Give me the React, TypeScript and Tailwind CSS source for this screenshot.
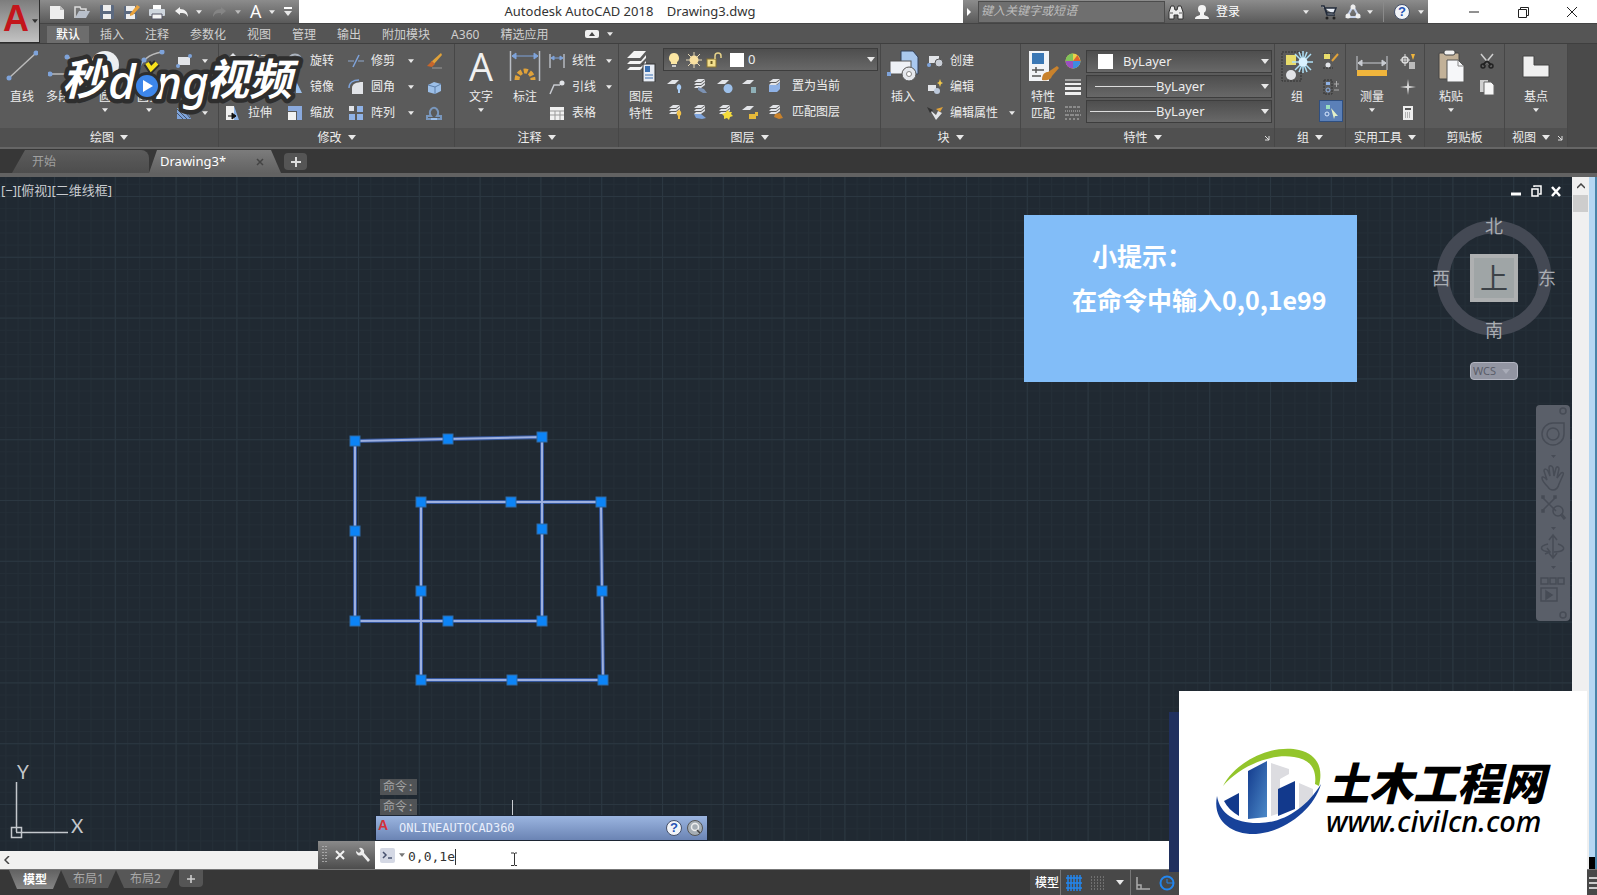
import type { ReactNode } from "react";

const SANS = "font-['Noto_Sans','Noto_Sans_CJK_SC',sans-serif]";
const MONO = "font-['DejaVu_Sans_Mono','Noto_Sans_CJK_SC',monospace]";

function Caret({ big = false, className = "text-[#e8e8e8]" }: { big?: boolean; className?: string }) {
  return (
    <svg viewBox="0 0 8 5" className={`${big ? "h-[5px] w-2" : "h-1 w-1.5"} shrink-0 ${className}`} aria-hidden>
      <path d="M0 0h8L4 5z" fill="currentColor" />
    </svg>
  );
}

/* ---------- icons ---------- */

function I16({ children }: { children: ReactNode }) {
  return (
    <svg viewBox="0 0 16 16" className="h-4 w-4 shrink-0" fill="none" aria-hidden>
      {children}
    </svg>
  );
}

function I32({ children }: { children: ReactNode }) {
  return (
    <svg viewBox="0 0 32 32" className="h-8 w-8 shrink-0" fill="none" aria-hidden>
      {children}
    </svg>
  );
}

const LIGHT = "#e2e4e8";
const BLUE = "#7ea3da";
const GOLD = "#e0a23a";

const quick = {
  fresh: <I16><path d="M1 2h10l4 4v9H1z" fill="#eee" /><path d="M11 2v4h4" fill="#bbb" /></I16>,
  open: <I16><path d="M1 14V3h5l1 2h5v3" stroke="#ddd" strokeWidth="1.5" /><path d="M1 14 5 7h11l-4 7z" fill="#b9c0cb" /></I16>,
  save: <I16><rect x="1" y="1" width="14" height="14" rx="1" fill="#5c6a80" /><rect x="4" y="1" width="8" height="6" fill="#eee" /><rect x="4" y="10" width="8" height="5" fill="#eee" /></I16>,
  saveAs: <I16><rect x="0" y="2" width="13" height="13" rx="1" fill="#5c6a80" /><rect x="2" y="2" width="9" height="5" fill="#eee" /><rect x="2" y="10" width="9" height="5" fill="#eee" /><path d="m6 10 7-9 3 2-7 8-3 1z" fill="#e9a23b" /></I16>,
  print: <I16><path d="M4 1h8v5H4z" fill="#fff" /><rect x="0" y="5" width="16" height="7" rx="1" fill="#cfd6de" /><path d="M3 10h10v5H3z" fill="#f4f4f4" stroke="#556" strokeWidth="1" /></I16>,
  undo: <I16><path d="M6 3 1 7l5 4V9c4 0 6 0 8 4 0-5-3-8-8-8z" fill="#f2f2f2" /></I16>,
  redo: <I16><path d="m10 3 5 4-5 4V9c-4 0-6 0-8 4 0-5 3-8 8-8z" fill="#858585" /></I16>,
};

const stack = <path d="M2 4 6 1h7l-4 3zM2 7l2-2h5l4-3v2L9 7zM2 10l2-2h5l4-3v2l-4 3z" fill={LIGHT} />;

const ico = {
  line: <I32><path d="M3 28 30 3" stroke="#bbb" strokeWidth="1.5" /><circle cx="3" cy="28" r="2.5" fill={BLUE} /><circle cx="30" cy="3" r="2.5" fill={BLUE} /></I32>,
  pline: <I32><path d="M2 24h18c8 0 8-16-2-17" stroke="#bbb" strokeWidth="1.5" /><circle cx="2" cy="24" r="2.5" fill={BLUE} /><circle cx="19" cy="7" r="2.5" fill={BLUE} /></I32>,
  circle: <I32><circle cx="16" cy="15" r="14" fill="#eceef0" /><circle cx="16" cy="15" r="2" fill={BLUE} /></I32>,
  arc: <I32><path d="M5 22C8 10 16 4 29 2" stroke="#bbb" strokeWidth="1.5" /><circle cx="29" cy="2" r="2.5" fill={BLUE} /><circle cx="11" cy="10" r="2.5" fill={BLUE} /></I32>,
  text: <span className="flex h-8 items-center font-['Open_Sans',sans-serif] text-[38px] text-[#f0f0f0]">A</span>,
  dim: <I32><path d="M1.5 1v30M30.5 1v30" stroke="#b9bdc4" strokeWidth="1.5" /><path d="M3 6h26M3 6l4-3v6zM29 6l-4-3v6z" stroke={BLUE} fill={BLUE} /><path d="M8 30a8 9 0 0 1 16 0" stroke={GOLD} strokeWidth="5" strokeDasharray="4 2" /></I32>,
  layers: <I32><path d="m2 8 7-7h12l-6 7zM2 14l3-3h11l5-6v3l-6 6zM2 20l3-3h11l5-6v3l-6 6z" fill="#f4f4f4" /><rect x="18" y="14" width="12" height="18" fill="#e8edf5" stroke="#333" /><rect x="20" y="16" width="5" height="6" fill="#3a6fb0" /><path d="M20 25h8M20 28h8" stroke="#3a6fb0" /></I32>,
  insert: <I32><path d="M14 1h12l5 6v17H14z" fill="#a9c8ef" stroke="#33415a" /><rect x="3" y="11" width="21" height="13" fill="#eef1f6" stroke="#555" /><circle cx="22" cy="24" r="7" fill="#e4e7ec" stroke="#555" /><circle cx="22" cy="24" r="2.5" fill="#fff" stroke="#888" /><rect x="0" y="22" width="4" height="4" fill={BLUE} /></I32>,
  match: <I32><rect x="2" y="1" width="20" height="30" fill="#f2f4f7" /><rect x="5" y="3" width="12" height="11" fill="#3b78b5" /><path d="M5 20h12M5 26h9M9 17v6" stroke="#555" strokeWidth="1.5" /><path d="M15 30c0-6 3-8 6-8l9-6 2 2-7 8c-1 4-6 5-10 4z" fill="#c9822c" /></I32>,
  group: <I32><rect x="1" y="2" width="19" height="29" stroke="#333" strokeDasharray="2 1" /><rect x="5" y="5" width="10" height="10" fill="#e9dd6b" /><circle cx="10" cy="25" r="5" fill={LIGHT} /><path d="M22 1v22M11 12h21M14 4l16 16M30 4 14 20M18 2l8 20M26 2l-8 20" stroke="#aee0f7" strokeWidth="1.5" /><circle cx="22" cy="12" r="4.5" fill="#d9f2ff" /></I32>,
  measure: <I32><path d="M1 6v14M31 6v14M2 13h28M2 13l4-3v6zM30 13l-4-3v6z" stroke="#c9ccd2" fill="#c9ccd2" /><rect x="1" y="20" width="30" height="6" fill="#f0b53c" /></I32>,
  paste: <I32><rect x="4" y="3" width="20" height="26" rx="1" fill="#c2b198" stroke="#444" /><rect x="9" y="0" width="11" height="5" rx="2" fill="#f2f2f2" stroke="#444" /><path d="M12 10h11l6 6v16H12z" fill="#f6f7f9" stroke="#555" /><path d="M23 10v6h6" stroke="#888" /></I32>,
  base: <I32><path d="M3 6h11v9h15v12H3z" fill="#f0f0f0" stroke="#444" /></I32>,

  rect: <I16><rect x="2" y="4" width="12" height="8" fill={LIGHT} /><circle cx="14" cy="3" r="2" fill={BLUE} /><circle cx="2" cy="13" r="2" fill={BLUE} /></I16>,
  ellipse: <I16><ellipse cx="8" cy="8" rx="7" ry="5" stroke={LIGHT} /></I16>,
  hatch: <I16><path d="M1 3h9l5 11H1z" fill={BLUE} /><path d="m1 8 6 6M1 4l10 10M6 3l8 10" stroke="#43536b" /></I16>,
  move: <I16><path d="M8 1v14M1 8h14" stroke={LIGHT} strokeWidth="1.5" /><path d="m8 0 3 3H5zM8 16l3-3H5zM0 8l3-3v6zM16 8l-3-3v6z" fill={LIGHT} /></I16>,
  copy: <I16><circle cx="6" cy="7" r="4.5" stroke={LIGHT} /><circle cx="11" cy="10" r="4" stroke={BLUE} /></I16>,
  stretch: <I16><path d="M1 1h8v14H1z" fill="#f0f0f0" /><path d="m9 1 5 14H9z" fill="#8db4e8" /><path d="M3 11h6M7 8l4 3-4 3z" stroke="#111" fill="#111" /></I16>,
  rotate: <I16><path d="M4 13A6.5 6.5 0 1 1 12 13" stroke="#aab2bd" strokeWidth="2" /><path d="m2 10 5 2-4 4z" fill={BLUE} /></I16>,
  mirror: <I16><path d="M7 2v12H1zM9 2l6 12H9z" fill="#9cc0ec" /></I16>,
  scale: <I16><path d="M1 1h14v14h-5V6H1z" fill="#8aa9dd" /><rect x="1" y="7" width="8" height="8" fill="#f2f2f2" /></I16>,
  trim: <I16><path d="M0 8h6M10 8h6" stroke="#7f8ea6" strokeWidth="1.5" /><path d="M11 2 5 14" stroke={BLUE} strokeWidth="1.5" /></I16>,
  fillet: <I16><path d="M4 15V9c0-4 4-6 11-6v12z" fill={LIGHT} /><path d="M1 9c0-5 4-8 10-8" stroke={BLUE} strokeWidth="1.5" /></I16>,
  array: <I16><rect x="1" y="1" width="5" height="5" fill={LIGHT} /><rect x="9" y="1" width="6" height="6" fill="#8fb2e6" /><rect x="1" y="9" width="6" height="6" fill="#8fb2e6" /><rect x="9" y="9" width="6" height="6" fill="#8fb2e6" /></I16>,
  erase: <I16><path d="m15 0 1 2-8 9-3-2z" fill={GOLD} /><path d="m1 13 5-5 3 3-3 3z" fill="#c7662b" /><path d="M6 15h10" stroke="#9a9a9a" /></I16>,
  explode: <I16><path d="m2 6 6-3 7 2v7l-6 3-7-2z" fill="#9cbfe8" /><path d="m2 6 7 2 6-3M9 8v7" stroke="#5d7fa9" /></I16>,
  offset: <I16><path d="M1 14v-3h4a4 5 0 1 1 6 0h4v3z" stroke="#7997bd" strokeWidth="2" /><path d="M5 14h6" stroke="#9cc0ec" strokeWidth="2" /></I16>,
  linear: <I16><path d="M1 1v14M15 1v14" stroke="#b5b9c0" strokeWidth="1.5" /><path d="M2 5h12M2 5l3-2v4zM14 5l-3-2v4z" stroke={BLUE} fill={BLUE} /></I16>,
  leader: <I16><path d="m1 15 4-9h6" stroke="#c7cad0" strokeWidth="1.5" /><circle cx="13" cy="4" r="2.5" fill={LIGHT} /></I16>,
  table: <I16><rect x="1" y="2" width="14" height="13" fill="#f0f0f0" /><path d="M1 6h14M1 10h14M6 6v9M11 6v9" stroke="#999" /></I16>,
  create: <I16><rect x="2" y="3" width="10" height="7" fill={LIGHT} /><circle cx="12" cy="10" r="4" fill="#c9ced6" stroke="#555" /><circle cx="2" cy="12" r="2" fill={BLUE} /></I16>,
  edit: <I16><rect x="1" y="6" width="8" height="6" fill={LIGHT} /><circle cx="10" cy="12" r="3" fill="#bcc8da" /><path d="m13 0 1 3 2 1-2 1-1 3-1-3-2-1 2-1z" fill="#f1c84b" /></I16>,
  attr: <I16><path d="m3 5 6 10 6-7-4-2-2 4z" fill={LIGHT} /><path d="m0 2 6 3-3 3z" fill="#333" /><path d="m9 4 7-2-3 5z" fill={GOLD} /></I16>,
  wheel: <I16><circle cx="8" cy="8" r="7.5" fill="#e9d24a" /><path d="M8 8V.5A7.5 7.5 0 0 0 .5 8z" fill="#7fc35a" /><path d="M8 8H.5A7.5 7.5 0 0 0 8 15.5z" fill="#9a4fc0" /><path d="M8 8v7.5A7.5 7.5 0 0 0 15.5 8z" fill="#3f8be0" /><path d="M8 8h7.5l-3-6z" fill="#e0622f" /></I16>,
  weight: <I16><path d="M0 1h16" stroke="#eee" /><path d="M0 5h16" stroke="#eee" strokeWidth="2" /><path d="M0 9.500h16" stroke="#eee" strokeWidth="3" /><path d="M0 14.500h16" stroke="#eee" strokeWidth="3" /></I16>,
  ltype: <I16><path d="M0 2h16" stroke="#bbb" strokeDasharray="3 1" /><path d="M0 6h16" stroke="#bbb" strokeDasharray="1 1" /><path d="M0 10h16" stroke="#bbb" strokeDasharray="4 1" /><path d="M0 14h16" stroke="#bbb" strokeDasharray="2 2" /></I16>,
  ungroup: <I16><rect x="1" y="1" width="6" height="5" fill="#e9dd6b" /><circle cx="5" cy="12" r="2.5" fill={LIGHT} /><path d="m9 8 6-7" stroke={GOLD} strokeWidth="2" /><path d="M0 0h10M0 15h10" stroke="#333" strokeDasharray="2 1" /></I16>,
  groupEdit: <I16><rect x="1" y="1" width="8" height="14" stroke="#333" strokeDasharray="2 1" /><rect x="3" y="3" width="4" height="3" fill="#8fb2e6" /><circle cx="5" cy="11" r="2" stroke="#8fb2e6" /><path d="M11 5h5M13.5 2v6M11 11h5" stroke="#aaa" /></I16>,
  groupSel: <I16><rect x="3" y="2" width="4" height="4" fill="#9be0c0" /><circle cx="4" cy="11" r="2" stroke="#d8e8ff" /><path d="m8 5 7 8-3 0-1 3z" fill="#e5f0c8" /></I16>,
  quickSel: <I16><circle cx="5" cy="7" r="3" stroke="#ddd" strokeWidth="1.5" /><path d="M5 1v12M0 7h10" stroke="#ddd" /><rect x="9" y="9" width="6" height="7" fill="#bbb" /><path d="M11 1h4l-2 6z" fill="#f0b53c" /></I16>,
  point: <I16><path d="m8 0 1 7 7 1-7 1-1 7-1-7-7-1 7-1z" fill="#ddd" /></I16>,
  calc: <I16><rect x="3" y="1" width="10" height="14" fill="#eee" /><path d="M5 4h6" stroke="#555" strokeWidth="2" /><path d="M5 8h6M5 10h6M5 12h6" stroke="#777" strokeDasharray="1 1" /></I16>,
  cut: <I16><path d="M2 1 11 12M14 1 5 12" stroke="#cfcfcf" strokeWidth="1.5" /><path d="m8 8-4 4M8 8l4 4" stroke="#222" strokeWidth="2" /><circle cx="4" cy="13" r="2" stroke="#222" strokeWidth="1.5" /><circle cx="12" cy="13" r="2" stroke="#222" strokeWidth="1.5" /></I16>,
  copyClip: <I16><path d="M1 1h8v12H1z" fill="#cfcfcf" /><path d="M5 3h7l3 3v10H5z" fill="#f6f6f6" stroke="#666" /></I16>,
  bulb: <I16><path d="M8 1a5 5 0 0 0-3 9v2h6v-2a5 5 0 0 0-3-9z" fill="#fbe6a2" /><path d="M6 13h4v2H6z" fill="#ccc" /></I16>,
  sun: <I16><path d="M8 0v16M0 8h16M2 2l12 12M14 2 2 14" stroke="#e7d9b6" /><circle cx="8" cy="8" r="4.5" fill="#f8dfa0" /></I16>,
  lock: <I16><rect x="1" y="7" width="9" height="8" fill="#f3df8d" stroke="#8a7430" /><path d="M9 7V4a3 3 0 0 1 6 0v2" stroke="#e6d28a" strokeWidth="1.5" /><path d="M5.5 9v3" stroke="#6b5a20" strokeWidth="2" /></I16>,
};

function LayerIcon({ tone, shape, full }: { tone: string; shape: string; full?: boolean }) {
  return (
    <I16>
      {full ? stack : <path d="M0 6 5 2h7L8 6z" fill={LIGHT} />}
      <path d={shape} fill={tone} />
    </I16>
  );
}

const LAYER_ROWS = [
  [
    { tone: "#a9cdf5", shape: "M12 6a3.500 3.500 0 0 0-1 6v3h2v-3a3.500 3.500 0 0 0-1-6z", full: false },
    { tone: "#7c92b3", shape: "m6 9 6 2 3 4-4 0-5-3z", full: true },
    { tone: "#9dc0ea", shape: "M11 6a4.500 4.500 0 1 0 .1 0z", full: false },
    { tone: "#8fb0b8", shape: "M9 9h5v6H9z", full: false },
    { tone: "#8fb2e6", shape: "M2 7h8l3-3v7l-3 3H2z", full: true },
  ],
  [
    { tone: "#f0c14a", shape: "M12 6a3.500 3.500 0 0 0-1 6v3h2v-3a3.500 3.500 0 0 0-1-6z", full: true },
    { tone: "#7ea3da", shape: "m2 10 7 0 5 4-4 1-6-1z", full: true },
    { tone: "#f5dc3c", shape: "m11 6 1 2 3 0-1 2 2 2-3 1-1 3-2-2-3 1 0-3-2-2 3-1z", full: true },
    { tone: "#e6b93a", shape: "M7 10h6V8h3v4h-2v3H7z", full: false },
    { tone: "#c9822c", shape: "m8 10 5-1 3 5-4 1-5-2z", full: true },
  ],
];

/* ---------- ribbon parts ---------- */

function Panel({ title, className, caret = true, launcher = false, children }: { title: string; className: string; caret?: boolean; launcher?: boolean; children: ReactNode }) {
  return (
    <section className={`flex shrink-0 flex-col border-r border-r-[#474747] ${className}`}>
      <div className="flex h-[84px] bg-[#5b5b5b] pt-1">{children}</div>
      <div className="flex h-[19px] items-center bg-[#505050]">
        <button className="flex flex-1 items-center justify-center gap-1.5">
          {title}
          {caret && <Caret big />}
        </button>
        {launcher && (
          <button aria-label={`${title}设置`} className="mr-1">
            <svg viewBox="0 0 6 6" className="h-1.5 w-1.5" fill="none" stroke="#e0e0e0" aria-hidden>
              <path d="M1 1l4 4M5 1v4H1" />
            </svg>
          </button>
        )}
      </div>
    </section>
  );
}

function Big({ icon, lines, caret = false, className = "w-11" }: { icon: ReactNode; lines: string[]; caret?: boolean; className?: string }) {
  return (
    <button className={`flex shrink-0 flex-col items-center self-start pt-0.5 ${className}`}>
      {icon}
      <span className="mt-1.5 whitespace-nowrap leading-[17px]">
        {lines.map((line) => (
          <span key={line} className="block">{line}</span>
        ))}
      </span>
      {caret && <Caret className="mt-[3px] text-[#e8e8e8]" />}
    </button>
  );
}

function Small({ icon, label, caret = false }: { icon: ReactNode; label?: string; caret?: boolean }) {
  return (
    <div className="flex h-[26px] items-center">
      <button className="flex flex-1 items-center gap-[7px] whitespace-nowrap text-left" aria-label={label ?? "工具"}>
        {icon}
        {label}
      </button>
      {caret && <button aria-label="展开" className="flex"><Caret /></button>}
    </div>
  );
}

function Column({ className = "", children }: { className?: string; children: ReactNode }) {
  return <div className={`flex shrink-0 flex-col ${className}`}>{children}</div>;
}

function Combo({ label, value, lead, className = "" }: { label: string; value: string; lead: ReactNode; className?: string }) {
  return (
    <div className={`relative flex h-[23px] items-center border border-[#3d3d3d] bg-linear-to-b from-[#4e4e4e] to-[#686868] ${className}`}>
      {lead}
      <select aria-label={label} className="h-full flex-1 appearance-none bg-transparent text-[13px] outline-none">
        <option>{value}</option>
      </select>
      <span className="pointer-events-none absolute right-0.5 flex"><Caret big /></span>
    </div>
  );
}

function Ribbon() {
  return (
    <div className="flex h-[104px] border-t border-[#3f3f3f] bg-[#4a4a4a] text-xs text-[#ededed]">
      <Panel title="绘图" className="w-[219px]">
        <Big icon={ico.line} lines={["直线"]} />
        <Big icon={ico.pline} lines={["多段线"]} className="w-10" />
        <Big icon={ico.circle} lines={["圆"]} caret className="w-[42px]" />
        <Big icon={ico.arc} lines={["圆弧"]} caret className="w-[46px]" />
        <Column className="ml-1 w-8">
          <Small icon={ico.rect} caret />
          <Small icon={ico.ellipse} caret />
          <Small icon={ico.hatch} caret />
        </Column>
      </Panel>

      <Panel title="修改" className="w-[236px]">
        <Column className="ml-1.5 w-[62px]">
          <Small icon={ico.move} label="移动" />
          <Small icon={ico.copy} label="复制" />
          <Small icon={ico.stretch} label="拉伸" />
        </Column>
        <Column className="w-[61px]">
          <Small icon={ico.rotate} label="旋转" />
          <Small icon={ico.mirror} label="镜像" />
          <Small icon={ico.scale} label="缩放" />
        </Column>
        <Column className="w-[66px]">
          <Small icon={ico.trim} label="修剪" caret />
          <Small icon={ico.fillet} label="圆角" caret />
          <Small icon={ico.array} label="阵列" caret />
        </Column>
        <Column className="ml-3 w-4">
          <Small icon={ico.erase} />
          <Small icon={ico.explode} />
          <Small icon={ico.offset} />
        </Column>
      </Panel>

      <Panel title="注释" className="w-[164px]">
        <Big icon={ico.text} lines={["文字"]} caret className="ml-1 w-11" />
        <Big icon={ico.dim} lines={["标注"]} />
        <Column className="ml-0.5 w-[63px]">
          <Small icon={ico.linear} label="线性" caret />
          <Small icon={ico.leader} label="引线" caret />
          <Small icon={ico.table} label="表格" />
        </Column>
      </Panel>

      <Panel title="图层" className="w-[262px]">
        <Big icon={ico.layers} lines={["图层", "特性"]} />
        <div className="flex flex-1 flex-col pr-0.5">
          <Combo
            label="图层"
            value="0"
            lead={
              <span className="flex items-center gap-1 pl-0.5 pr-1">
                {ico.bulb}
                {ico.sun}
                {ico.lock}
                <span className="ml-1 h-3.5 w-3.5 bg-white" />
              </span>
            }
          />
          {LAYER_ROWS.map((row, i) => (
            <div key={i} className="mt-[3px] flex h-[23px] items-center gap-[9px] pl-1">
              {row.map((icon, j) => (
                <button key={j} aria-label="图层工具"><LayerIcon {...icon} /></button>
              ))}
              <button className="whitespace-nowrap">{i === 0 ? "置为当前" : "匹配图层"}</button>
            </div>
          ))}
        </div>
      </Panel>

      <Panel title="块" className="w-[140px]">
        <Big icon={ico.insert} lines={["插入"]} />
        <Column className="ml-0.5 w-[88px]">
          <Small icon={ico.create} label="创建" />
          <Small icon={ico.edit} label="编辑" />
          <Small icon={ico.attr} label="编辑属性" caret />
        </Column>
      </Panel>

      <Panel title="特性" launcher className="w-[254px]">
        <Big icon={ico.match} lines={["特性", "匹配"]} />
        <Column className="w-[21px]">
          <Small icon={ico.wheel} />
          <Small icon={ico.weight} />
          <Small icon={ico.ltype} />
        </Column>
        <div className="flex flex-1 flex-col gap-0.5 pr-0.5 pt-0.5">
          <Combo label="对象颜色" value="ByLayer" lead={<span className="ml-[11px] mr-2.5 h-[15px] w-[15px] bg-white" />} />
          <Combo label="线宽" value="ByLayer" lead={<span className="ml-2 h-px w-[61px] bg-[#ddd]" />} />
          <Combo label="线型" value="ByLayer" lead={<span className="ml-[3px] h-px w-[66px] bg-[#ddd]" />} />
        </div>
      </Panel>

      <Panel title="组" className="w-[71px]">
        <Big icon={ico.group} lines={["组"]} />
        <Column className="w-6 items-center">
          <Small icon={ico.ungroup} />
          <Small icon={ico.groupEdit} />
          <div className="border border-[#2f4f80] bg-[#5b80b8] px-[3px]">
            <button aria-label="组选择" className="flex h-5 items-center">{ico.groupSel}</button>
          </div>
        </Column>
      </Panel>

      <Panel title="实用工具" className="w-[79px]">
        <Big icon={ico.measure} lines={["测量"]} caret className="ml-1 w-11" />
        <Column className="ml-1.5 w-4">
          <Small icon={ico.quickSel} />
          <Small icon={ico.point} />
          <Small icon={ico.calc} />
        </Column>
      </Panel>

      <Panel title="剪贴板" caret={false} className="w-[80px]">
        <Big icon={ico.paste} lines={["粘贴"]} caret className="ml-1 w-11" />
        <Column className="ml-1.5 w-4">
          <Small icon={ico.cut} />
          <Small icon={ico.copyClip} />
        </Column>
      </Panel>

      <Panel title="视图" launcher className="w-[63px]">
        <Big icon={ico.base} lines={["基点"]} caret className="w-full" />
      </Panel>
    </div>
  );
}

/* ---------- title bar and menu ---------- */

const MENU = ["插入", "注释", "参数化", "视图", "管理", "输出", "附加模块", "A360", "精选应用"];

function Header() {
  return (
    <header className="flex h-[43px] bg-[#555]">
      <button aria-label="应用程序菜单" className="flex w-10 shrink-0 items-center border-b border-r border-[#2c2c2c] bg-linear-to-b from-[#7d7d7d] to-[#c2c2c2]">
        <span className="flex h-10 w-8 items-start justify-center font-['Liberation_Sans',sans-serif] text-[36px] font-bold leading-9 text-[#c4161c]">A</span>
        <Caret className="text-[#333]" />
      </button>
      <div className="flex min-w-0 flex-1 flex-col">
        <div className="flex h-[23px] bg-white">
          <div className="flex w-[259px] shrink-0 items-center gap-[9px] bg-linear-to-b from-[#8c8c8c] to-[#5a5a5a] pl-[9px]">
            <button aria-label="新建">{quick.fresh}</button>
            <button aria-label="打开">{quick.open}</button>
            <button aria-label="保存">{quick.save}</button>
            <button aria-label="另存为">{quick.saveAs}</button>
            <button aria-label="打印">{quick.print}</button>
            <button aria-label="放弃" className="flex items-center gap-1.5">{quick.undo}<Caret /></button>
            <button aria-label="重做" className="flex items-center gap-2">{quick.redo}<Caret className="text-[#bbb]" /></button>
            <button className="flex items-center gap-2 font-['Open_Sans',sans-serif] text-lg leading-[23px] text-white">A<Caret /></button>
            <button aria-label="自定义" className="flex flex-col items-center gap-0.5">
              <span className="h-0.5 w-2 bg-white" />
              <Caret big />
            </button>
          </div>
          <h1 className="flex flex-1 items-center justify-center whitespace-pre pr-0.5 text-[13px] text-[#333]">Autodesk AutoCAD 2018    Drawing3.dwg</h1>
          <div className="flex w-[465px] shrink-0 items-center bg-linear-to-b from-[#8c8c8c] to-[#5a5a5a] text-xs text-white">
            <svg viewBox="0 0 4 8" className="ml-1 h-2 w-1" aria-hidden><path d="M0 0v8l4-4z" fill="#fff" /></svg>
            <input aria-label="搜索" placeholder="键入关键字或短语" className="ml-[7px] h-[22px] w-[187px] border border-[#4c4c4c] bg-[#6f6f6f] px-0.5 pb-0.5 text-xs italic outline-none placeholder:text-[#bdbdbd]" />
            <button aria-label="查找" className="ml-[3px]">
              <I16><path d="M1 15V8l2-6h3l1 4h2l1-4h3l2 6v7h-5v-4H6v4z" fill="#eee" stroke="#333" strokeWidth="1" /><path d="M2 9h3M11 9h3" stroke="#555" /></I16>
            </button>
            <button className="ml-2.5 flex items-center gap-1.5">
              <I16><circle cx="8" cy="5" r="4" fill="#f4f4f4" /><path d="M1 15c0-3 3-3 5-4V8h4v3c2 1 5 1 5 4z" fill="#f4f4f4" /></I16>
              登录
            </button>
            <button aria-label="登录选项" className="ml-[63px]"><Caret /></button>
            <button aria-label="购物车" className="ml-3">
              <I16><path d="M0 2h3l3 9h8M4 4h11l-2 5H6z" stroke="#222b3a" strokeWidth="1.5" fill="#e8edf5" /><circle cx="6" cy="14" r="1.5" fill="#222" /><circle cx="13" cy="14" r="1.5" fill="#222" /></I16>
            </button>
            <button aria-label="A360" className="ml-2 flex items-center gap-1.5">
              <I16><path d="M8 2 2 13h12z" stroke="#c6d2ea" strokeWidth="2" /><circle cx="8" cy="3" r="2.5" fill="#eee" /><circle cx="3" cy="12" r="2.5" fill="#eee" /><circle cx="13" cy="12" r="2.5" fill="#eee" /></I16>
              <Caret />
            </button>
            <span className="ml-2.5 h-5 w-px bg-[#8a8a8a]" />
            <button aria-label="帮助" className="ml-2.5 flex items-center gap-2">
              <HelpBadge />
              <Caret />
            </button>
          </div>
          <div className="flex w-[169px] shrink-0 items-center justify-end gap-[33px] pr-[17px]">
            <button aria-label="最小化"><I16><path d="M3 8h10" stroke="#222" /></I16></button>
            <button aria-label="还原"><I16><path d="M3.5 5.5h8v8h-8zM5.5 5V3.5h8v8H12" stroke="#222" /></I16></button>
            <button aria-label="关闭"><I16><path d="m3 3 10 10M13 3 3 13" stroke="#222" /></I16></button>
          </div>
        </div>
        <nav className="flex h-5 items-center gap-[21px] border-t border-[#444] pl-[7px] text-xs text-[#d0d0d0]">
          <button className="-mr-2.5 flex h-[17px] w-[42px] items-center justify-center self-end bg-[#6d6d6d] font-medium text-white">默认</button>
          {MENU.map((item) => (
            <button key={item} className="min-w-6 whitespace-nowrap pt-0.5">{item}</button>
          ))}
          <button aria-label="显示" className="ml-4 flex items-center gap-2">
            <svg viewBox="0 0 14 8" className="h-2 w-3.5" aria-hidden><rect width="14" height="8" rx="2" fill="#f0f0f0" /><path d="M4 6h6L7 2z" fill="#444" /></svg>
            <Caret />
          </button>
        </nav>
      </div>
    </header>
  );
}

function HelpBadge() {
  return (
    <span className="flex h-4 w-4 items-center justify-center rounded-full border border-[#44506a] bg-[#f2f4f8] font-['Liberation_Sans',sans-serif] text-[13px] font-bold leading-4 text-[#2653b5]">?</span>
  );
}

function FileTabs() {
  return (
    <div className="flex h-[30px] items-end border-b-4 border-t-2 border-b-[#626262] border-t-[#666] bg-[#373737] pl-3 text-[13px]">
      <button className="flex h-[23px] w-[137px] items-center rounded-t-lg bg-linear-to-b from-[#5c5c5c] to-[#4d4d4d] pl-5 text-xs text-[#a0a0a0] [clip-path:polygon(13px_0,100%_0,100%_100%,0_100%)]">开始</button>
      <div className="flex h-[23px] w-[132px] items-center rounded-t-lg bg-linear-to-b from-[#7c7c7c] to-[#626262] pl-[11px] text-white [clip-path:polygon(8px_0,calc(100%-10px)_0,100%_100%,0_100%)]">
        <button className="flex-1 text-left">Drawing3*</button>
        <button aria-label="关闭标签" className="mr-[17px]">
          <svg viewBox="0 0 8 8" className="h-2 w-2" stroke="#444" strokeWidth="1.5" aria-hidden><path d="m1 1 6 6M7 1 1 7" /></svg>
        </button>
      </div>
      <button aria-label="新标签" className="mb-[3px] ml-[3px] flex h-[17px] w-[23px] items-center justify-center rounded bg-[#555]">
        <svg viewBox="0 0 10 10" className="h-2.5 w-2.5" stroke="#ddd" strokeWidth="2" aria-hidden><path d="M5 0v10M0 5h10" /></svg>
      </button>
    </div>
  );
}

/* ---------- drawing area ---------- */

const SHAPES = [
  [[355, 264], [448, 262], [542, 260], [542, 352], [542, 444], [448, 444], [355, 444], [355, 354]],
  [[421, 325], [511, 325], [601, 325], [602, 414], [603, 503], [512, 503], [421, 503], [421, 414]],
];

function Drawing() {
  return (
    <svg className="absolute inset-0 h-full w-full" aria-hidden>
      <defs>
        <pattern id="minor" width="12.16" height="12.16" x="54" y="19" patternUnits="userSpaceOnUse">
          <path d="M.5 0v13M0 .5h13" stroke="#242e37" fill="none" />
        </pattern>
        <pattern id="major" width="60.8" height="60.8" x="54" y="19" patternUnits="userSpaceOnUse">
          <path d="M.5 0v61M0 .5h61" stroke="#2b3741" fill="none" />
        </pattern>
      </defs>
      <rect width="100%" height="100%" fill="url(#minor)" />
      <rect width="100%" height="100%" fill="url(#major)" />
      {SHAPES.map((pts, i) => (
        <polygon key={i} points={pts.join(" ")} fill="none" stroke="#34569c" strokeWidth="4" />
      ))}
      {SHAPES.map((pts, i) => (
        <polygon key={i} points={pts.join(" ")} fill="none" stroke="#9db0e0" strokeWidth="2" />
      ))}
      {SHAPES.flat().map(([x, y]) => (
        <rect key={`${x}-${y}`} x={x - 5} y={y - 5} width="10" height="10" fill="#0c84f7" stroke="#2f6aa6" />
      ))}
    </svg>
  );
}

function ViewCube() {
  return (
    <div className="absolute right-4 top-[34px] flex w-[124px] flex-col items-center text-lg leading-[18px] text-[#a9adb3]">
      <div className="relative flex h-[134px] w-[124px] flex-col items-center justify-between py-1.5">
        <svg viewBox="0 0 124 134" className="absolute inset-0" aria-hidden>
          <circle cx="62" cy="67" r="51" fill="none" stroke="#444954" strokeWidth="13" />
        </svg>
        <button className="relative">北</button>
        <div className="relative flex w-full items-center justify-between">
          <button>西</button>
          <button className="flex h-12 w-12 items-center justify-center border-4 border-[#aeb0b1] bg-[#9fa5a6] text-[28px] leading-10 text-[#3c4247]">上</button>
          <button>东</button>
        </div>
        <button className="relative">南</button>
      </div>
      <button className="mt-[17px] flex h-[18px] w-12 items-center gap-1.5 rounded border border-[#b4b6c2] bg-[#9295a2] pl-0.5 text-[11px] leading-4 text-[#5a5d69]">
        WCS
        <Caret big className="text-[#a9acb8]" />
      </button>
    </div>
  );
}

function NavBar() {
  return (
    <div className="absolute right-0.5 top-[228px] flex w-[34px] flex-col items-center rounded bg-[#5a5f69]">
      <svg viewBox="0 0 34 216" className="h-[216px] w-[34px]" fill="none" stroke="#474c56" strokeWidth="1.5" aria-hidden>
        <circle cx="27" cy="6" r="3" />
        <path d="M17 18h11v11a11 11 0 1 1-11-11z" />
        <circle cx="17" cy="29" r="6" />
        <path d="M15 50h5l-2.5 3zM15 122h5l-2.5 3zM15 161h5l-2.5 3z" fill="#474c56" stroke="none" />
        <path d="M12 82c-3-3-6-7-6-9s3-1 5 2l-3-9c0-3 3-2 4 0l2 5-1-8c0-3 3-3 4 0l1 8 2-8c1-2 3-1 3 1l-2 9 4-5c2-1 3 0 2 2l-4 9c-1 4-3 6-6 6s-4-1-5-3z" />
        <path d="m6 92 14 14M20 92 6 106" />
        <circle cx="22" cy="106" r="5" />
        <path d="m25 109 4 5" strokeWidth="3" />
        <path d="M6 91h2v2H6zM18 91h2v2h-2zM6 105h2v2H6z" fill="#474c56" />
        <path d="M17 131v21M13 135l4-5 4 5M13 148l4 5 4-5" />
        <path d="M12 139c-9 2-9 7 2 8M22 139c9 3 7 8-4 8M9 149l5-2-3-4" />
        <path d="M5 173h7v6H5zM14 173h6v6h-6zM22 173h6v6h-6zM5 183h16v13H5z" />
        <path d="m10 186 6 4-6 4z" fill="#474c56" />
        <circle cx="27" cy="210" r="3" />
      </svg>
    </div>
  );
}

function Ucs() {
  return (
    <svg viewBox="0 0 90 96" className="absolute bottom-2 left-0 h-24 w-[90px]" fill="none" stroke="#c3c7cc" aria-hidden>
      <path d="M16.5 35v50M16 85.5h52" strokeWidth="1.5" />
      <rect x="11.5" y="80.5" width="10" height="10" strokeWidth="1.5" />
      <text x="17" y="32" fontSize="19" fontFamily="Lato, sans-serif" fill="#c3c7cc" stroke="none">Y</text>
      <text x="71" y="86" fontSize="19" fontFamily="Lato, sans-serif" fill="#c3c7cc" stroke="none">X</text>
    </svg>
  );
}

function CommandLine() {
  return (
    <div className="absolute bottom-0 left-[318px] right-0 flex flex-col">
      <div className={`ml-[62px] flex flex-col items-start gap-1 text-xs leading-4 text-[#a5a5a5] ${MONO}`}>
        <span className="h-4 bg-[#505356] px-[3px]">命令:</span>
        <span className="h-4 bg-[#505356] px-[3px]">命令:</span>
      </div>
      <div className={`ml-[57px] flex h-[26px] w-[333px] items-center border border-[#1c2533] bg-linear-to-b from-[#9bb5e0] to-[#6b84b4] text-[#e8eefb] ${MONO}`}>
        <span className="mb-1.5 ml-0.5 w-4 font-['Liberation_Sans',sans-serif] text-sm font-bold text-[#d3303a]">A</span>
        <button className="ml-[5px] flex-1 text-left text-xs">ONLINEAUTOCAD360</button>
        <button aria-label="帮助"><HelpBadge /></button>
        <button aria-label="联机搜索" className="ml-[5px] mr-1 flex h-4 w-4 items-center justify-center rounded-full border border-[#555] bg-[#a5adb4]">
          <svg viewBox="0 0 12 12" className="h-3 w-3" fill="none" stroke="#eee" strokeWidth="1.5" aria-hidden><circle cx="6" cy="5" r="3.5" /><path d="m8 8 3 3" stroke="#444" /></svg>
        </button>
      </div>
      <div className="flex h-7 items-stretch bg-white">
        <div className="flex w-[57px] items-center gap-2 bg-linear-to-b from-[#8a8a8a] to-[#4d4d4d] pl-1">
          <svg viewBox="0 0 5 18" className="h-[18px] w-[5px]" aria-hidden><path d="M1 0v18M4 0v18" stroke="#bbb" strokeWidth="1.5" strokeDasharray="1 2" /></svg>
          <button aria-label="关闭命令行"><svg viewBox="0 0 10 10" className="h-2.5 w-2.5" stroke="#f2f2f2" strokeWidth="2" aria-hidden><path d="m1 1 8 8M9 1 1 9" /></svg></button>
          <button aria-label="自定义" className="ml-0.5"><I16><path d="M1 4a4 4 0 0 0 6 4l6 7 2-2-6-7a4 4 0 0 0-5-5l2 3-2 2z" fill="#ececec" /></I16></button>
        </div>
        <div className="flex flex-1 items-center pl-[5px]">
          <svg viewBox="0 0 15 15" className="h-[15px] w-[15px]" fill="none" stroke="#4a5470" strokeWidth="1.5" aria-hidden><rect width="15" height="15" rx="2" fill="#d4d8e4" stroke="none" /><path d="m3 4 3 3-3 3M8 10h4" /></svg>
          <Caret className="ml-1 text-[#777]" />
          <label className="ml-[3px] flex flex-1 items-center pt-1">
            <input aria-label="命令" defaultValue="0,0,1e" size={6} className={`w-12 border-r border-[#333] bg-transparent text-[13px] leading-4 text-[#333] outline-none ${MONO}`} />
          </label>
        </div>
      </div>
    </div>
  );
}

function Pointer() {
  return (
    <svg viewBox="0 0 16 70" className="absolute bottom-0 left-[506px] h-[70px] w-4" fill="none" stroke="#c9cdd2" aria-hidden>
      <path d="M6.5 1v15" />
      <path d="M5 54h3l.5.5.5-.5h2M5 66.5h3l.5-.5.5.5h2M8.5 54v12" stroke="#333" />
    </svg>
  );
}

function Tip() {
  return (
    <aside className="absolute right-[215px] top-[38px] flex h-[167px] w-[333px] flex-col bg-[#82bdf8] pl-12 pt-[18px] font-['Noto_Sans_CJK_SC',sans-serif] text-[25px] font-bold leading-[44px] text-white">
      <p className="pl-5">小提示：</p>
      <p className="whitespace-nowrap">在命令中输入0,0,1e99</p>
    </aside>
  );
}

function Workspace() {
  return (
    <main className="flex min-h-0 flex-1">
      <div className="relative flex min-w-0 flex-1 flex-col">
        <div className="relative flex-1 overflow-hidden bg-[#202932]">
          <Drawing />
          <div className="relative flex items-start justify-between pl-px pr-2 pt-1 text-[13px] leading-[18px] text-[#c9ccd0]">
            <span>[−][俯视][二维线框]</span>
            <div className="flex gap-1 pt-0.5 text-white">
              <button aria-label="最小化视口"><I16><path d="M3 11h10" stroke="#fff" strokeWidth="3" /></I16></button>
              <button aria-label="还原视口"><I16><path d="M4 6h6v7H4zM6 4V3h7v8h-2" stroke="#fff" strokeWidth="1.5" /></I16></button>
              <button aria-label="关闭视口"><I16><path d="m4 4 8 9M12 4l-8 9" stroke="#fff" strokeWidth="2.5" /></I16></button>
            </div>
          </div>
          <Tip />
          <ViewCube />
          <NavBar />
          <Ucs />
        </div>
        <div className="flex h-[18px] items-center bg-[#f1f1f0] pl-1">
          <button aria-label="向左滚动"><svg viewBox="0 0 6 8" className="h-2 w-1.5" fill="none" stroke="#444" strokeWidth="1.5" aria-hidden><path d="M5 0 1 4l4 4" /></svg></button>
        </div>
        <CommandLine />
        <Pointer />
      </div>
      <div className="flex w-[17px] flex-col items-center bg-[#f0f0f0]">
        <button aria-label="向上滚动" className="flex h-[18px] items-center"><svg viewBox="0 0 8 6" className="h-1.5 w-2" fill="none" stroke="#444" strokeWidth="1.5" aria-hidden><path d="m0 5 4-4 4 4" /></svg></button>
        <div className="h-[17px] w-[15px] bg-[#cdcdcd]" />
      </div>
      <div className="flex w-2 flex-col border-r-2 border-[#4884a8] bg-[#b5d7f2]">
        <div className="mt-auto h-3 bg-black" />
      </div>
    </main>
  );
}

function StatusBar() {
  return (
    <footer className="flex h-[26px] justify-between border-t border-[#777] bg-[#373737] text-xs text-[#a8a8a8]">
      <div className="flex items-start pl-[9px]">
        <button className="h-[19px] w-[52px] rounded-b-lg bg-linear-to-b from-[#626262] to-[#858585] font-bold text-white [clip-path:polygon(0_0,100%_0,calc(100%-8px)_100%,8px_100%)]">模型</button>
        <button className="h-[18px] w-[55px] rounded-b-lg bg-[#575757] [clip-path:polygon(0_0,100%_0,calc(100%-8px)_100%,8px_100%)]">布局1</button>
        <button className="h-[18px] w-[59px] rounded-b-lg bg-[#575757] [clip-path:polygon(0_0,100%_0,calc(100%-8px)_100%,8px_100%)]">布局2</button>
        <button aria-label="新建布局" className="ml-1 flex h-[17px] w-6 items-center justify-center rounded-b bg-[#555]">
          <svg viewBox="0 0 10 10" className="h-2 w-2" stroke="#ccc" strokeWidth="2" aria-hidden><path d="M5 0v10M0 5h10" /></svg>
        </button>
      </div>
      <div className="flex w-[567px] items-center bg-[#484848]">
        <button className="h-full w-[31px] border-r border-[#777] pl-1 font-medium text-white">模型</button>
        <button aria-label="栅格" className="ml-[5px]"><I16><path d="M2 0v16M5 0v16M8 0v16M11 0v16M14 0v16M0 3h16M0 8h16M0 13h16" stroke="#2386ee" strokeWidth="1.5" /></I16></button>
        <button aria-label="捕捉" className="ml-2"><I16><path d="M1 2h15M1 5h15M1 8h15M1 11h15M1 14h15" stroke="#999" strokeDasharray="1 2" /></I16></button>
        <button aria-label="捕捉选项" className="ml-2.5"><Caret big /></button>
        <button aria-label="正交" className="ml-1.5 flex h-full items-center border-l border-[#777] pl-1"><I16><path d="M2 2v12h13M2 10h4v4" stroke="#aaa" strokeWidth="1.5" /></I16></button>
        <button aria-label="极轴" className="ml-2"><I16><circle cx="8" cy="8" r="6.5" stroke="#2386ee" strokeWidth="2" /><path d="M8 8h6M8 4v4" stroke="#2386ee" /></I16></button>
        <button aria-label="菜单" className="ml-auto"><svg viewBox="0 0 8 14" className="h-3.5 w-2" stroke="#ccc" strokeWidth="2" aria-hidden><path d="M0 2h8M0 7h8M0 12h8" /></svg></button>
      </div>
    </footer>
  );
}

/* ---------- overlaid marks ---------- */

function VideoMark() {
  return (
    <svg viewBox="0 0 250 70" className="pointer-events-none absolute left-14 top-12 h-[70px] w-[250px]" aria-label="秒dong视频">
      <g fontFamily="'Noto Sans','Noto Sans CJK SC',sans-serif" fill="#fff" stroke="#2e2e2e" strokeWidth="9" strokeLinejoin="round" paintOrder="stroke" fontStyle="italic">
        <text x="6" y="47" fontSize="43" fontWeight="700">秒</text>
        <text x="52" y="51" fontSize="48" fontWeight="500">d</text>
        <text x="99" y="51" fontSize="46" fontWeight="500">ng</text>
        <text x="150" y="47" fontSize="43" fontWeight="700">视频</text>
      </g>
      <circle cx="91" cy="38" r="14" fill="#2e2e2e" />
      <circle cx="91" cy="38" r="11" fill="#3d86ea" />
      <path d="m87 32 10 6-10 6z" fill="#fff" />
      <path d="m91 15 4 6 6-6" fill="none" stroke="#2e2e2e" strokeWidth="8" />
      <path d="m91 15 4 6 6-6" fill="none" stroke="#f8e21c" strokeWidth="4" />
    </svg>
  );
}

function SiteMark() {
  return (
    <div className="absolute bottom-0 right-2.5 flex items-start">
      <div className="mt-[21px] h-40 w-2.5 bg-[#20305e]" />
      <div className="flex h-[204px] w-[408px] items-start bg-white pl-9 pt-14">
        <svg viewBox="0 0 110 90" className="h-[90px] w-[110px] shrink-0" aria-hidden>
          <defs>
            <linearGradient id="tower" x1="0" y1="0" x2="1" y2="1">
              <stop offset="0" stopColor="#12398c" />
              <stop offset="1" stopColor="#4c8ac8" />
            </linearGradient>
          </defs>
          <path d="M8 39C22 12 60-3 84 3c20 5 24 19 20 36l-4-2c2-15-5-25-21-27C55 6 24 20 8 39z" fill="#93c52b" />
          <path d="M56 16v53l9-3V32l9-5v-5zM84 36v26l14-10V42z" fill="#dcdce0" />
          <path d="M33 24 52 14v56l-19 2z" fill="url(#tower)" />
          <path d="M9 54 24 46v23C17 65 12 60 9 54zM63 42l17-8v28l-17 7z" fill="#12398c" />
          <path d="M2 49C-3 74 17 88 41 87c29-2 58-25 65-50-15 25-40 40-64 39C20 76 5 67 2 49z" fill="#17429a" />
        </svg>
        <div className="pt-3 text-black">
          <p className="whitespace-nowrap text-[44px] font-black italic leading-[48px]">土木工程网</p>
          <p className="pl-px font-['Noto_Sans',sans-serif] text-[29px] font-medium italic leading-7">www.civilcn.com</p>
        </div>
      </div>
    </div>
  );
}

export default function App() {
  return (
    <div className={`relative flex h-screen flex-col overflow-hidden bg-[#373737] ${SANS}`}>
      <Header />
      <Ribbon />
      <FileTabs />
      <Workspace />
      <StatusBar />
      <VideoMark />
      <SiteMark />
    </div>
  );
}
